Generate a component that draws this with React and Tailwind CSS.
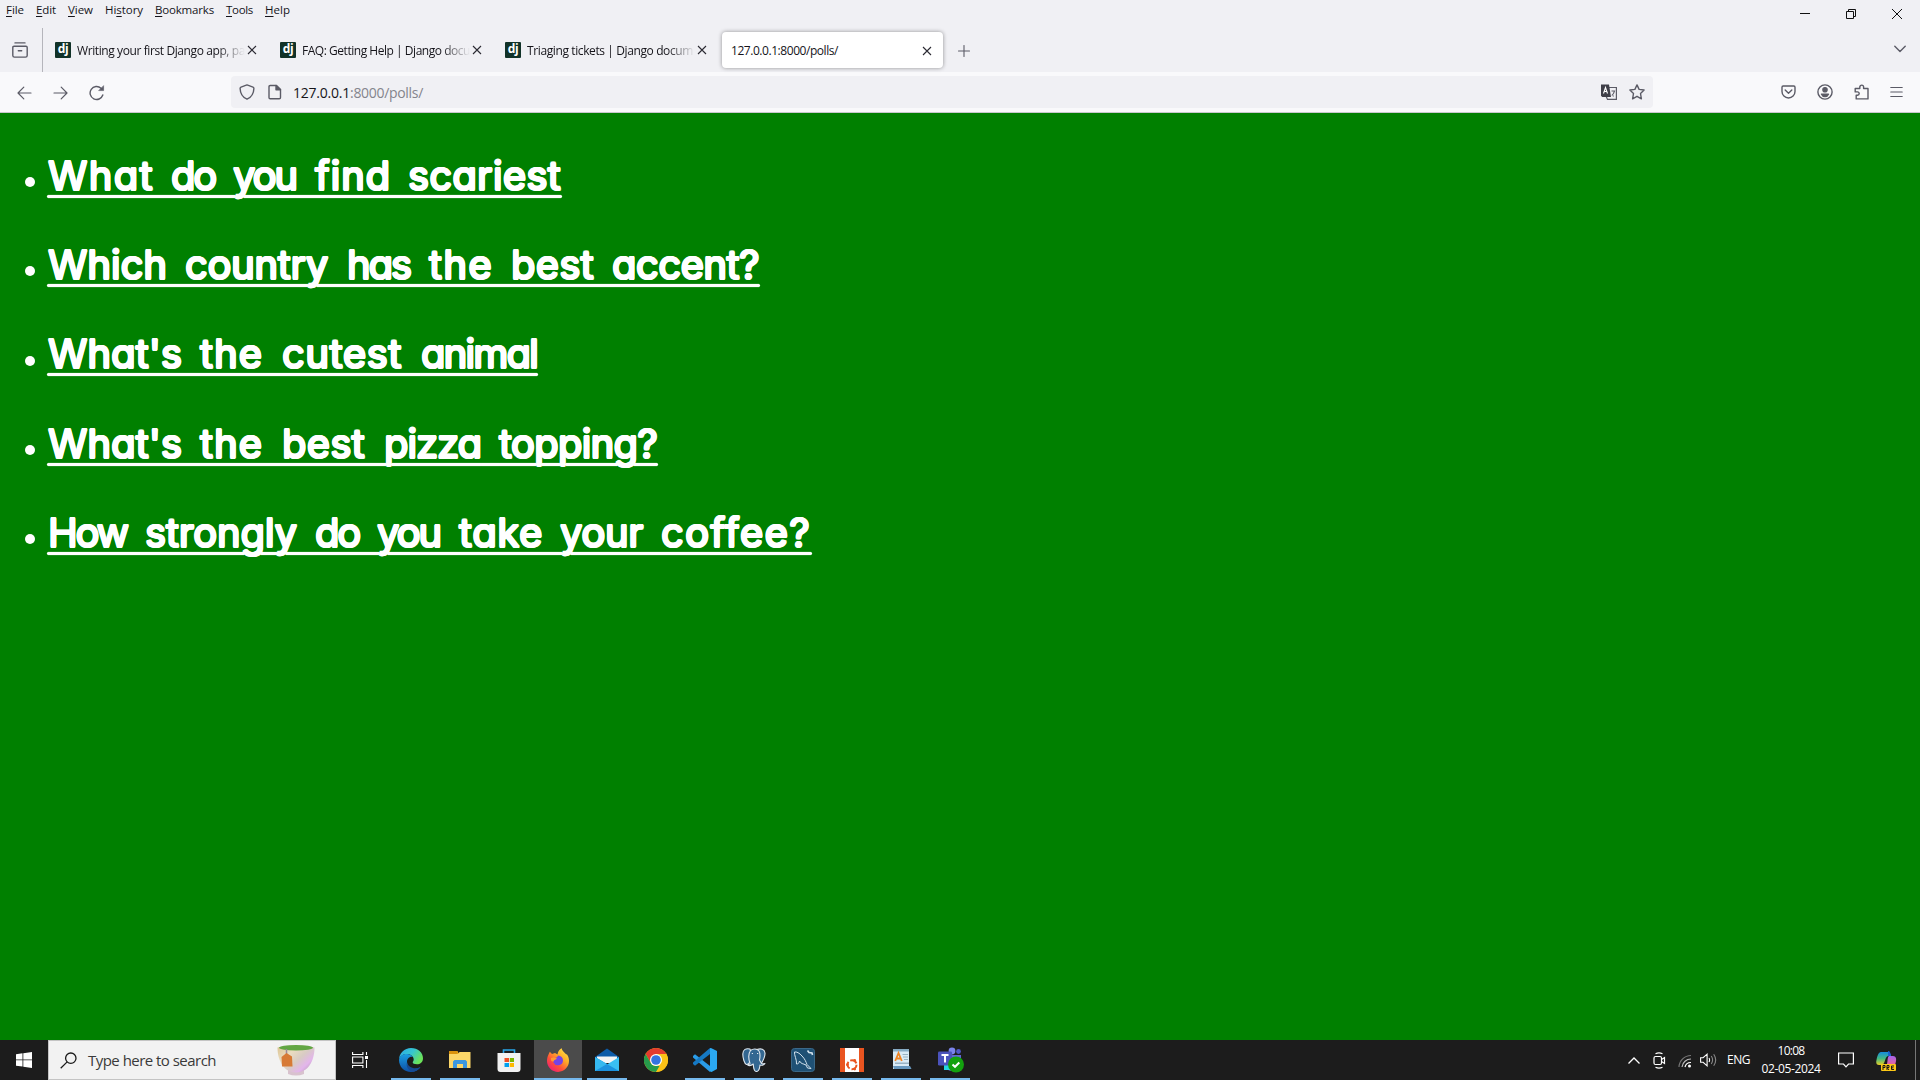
import React, { useLayoutEffect, useRef } from "react";

// Tracks a label so that it fills a given advance width.
function Fit({ w, children, className = "" }) {
  const ref = useRef(null);
  useLayoutEffect(() => {
    const el = ref.current;
    el.style.letterSpacing = "0px";
    const natural = el.getBoundingClientRect().width;
    el.style.letterSpacing = `${(w - natural) / el.textContent.length}px`;
  }, [w, children]);
  return (
    <span ref={ref} className={`whitespace-pre ${className}`}>
      {children}
    </span>
  );
}

const menus = [
  ["", "F", "ile", 18, "w-[30px]"],
  ["", "E", "dit", 20, "w-8"],
  ["", "V", "iew", 25, "w-[37px]"],
  ["Hi", "s", "tory", 38, "w-[50px]"],
  ["", "B", "ookmarks", 59, "w-[71px]"],
  ["", "T", "ools", 27, "w-[39px]"],
  ["", "H", "elp", 25, "w-[30px]"],
];

const questions = [
  [["What", 106], ["do", 44], ["you", 63], ["find", 76], ["scariest", 153]],
  [["Which", 119], ["country", 143], ["has", 63], ["the", 64], ["best", 83], ["accent?", 147]],
  [["What's", 134], ["the", 63], ["cutest", 120], ["animal", 116]],
  [["What's", 134], ["the", 63], ["best", 83], ["pizza", 97], ["topping?", 158]],
  [["How", 79], ["strongly", 152], ["do", 44], ["you", 63], ["take", 84], ["your", 83], ["coffee?", 150]],
];
const gaps = [
  [17, 18, 19, 17],
  [18, 19, 19, 18, 18],
  [18, 19, 19],
  [18, 19, 19, 18],
  [18, 18, 18, 19, 17, 18],
];

const Close = () => (
  <svg width="10" height="10" viewBox="0 0 10 10" className="shrink-0" stroke="#2b2a33" strokeWidth="1.1" fill="none">
    <path d="M1 1l8 8M9 1l-8 8" />
  </svg>
);

function Tab({ title, w }) {
  return (
    <div className="flex w-[225px] items-center pl-[11px]">
      <div className="flex h-4 w-4 shrink-0 items-center justify-center rounded-[1px] bg-[#113228] pb-[2px] font-['Open_Sans',sans-serif] text-[12px] leading-none font-bold tracking-[-0.5px] text-white">
        dj
      </div>
      <div className="mt-[2px] ml-[6px] w-[168px] [mask-image:linear-gradient(to_right,black_140px,transparent_168px)] text-[12px] leading-5 text-[#15141a]">
        <Fit w={w}>{title}</Fit>
      </div>
      <div className="ml-[2px] flex"><Close /></div>
    </div>
  );
}

const line = { fill: "none", stroke: "#5b5b66", strokeWidth: 1.4, strokeLinecap: "round", strokeLinejoin: "round" };

function Browser() {
  return (
    <header className="font-['Open_Sans',sans-serif]">
      <div className="flex h-7 justify-between bg-[#f0f0f4]">
        <div className="flex h-5 pl-[6px] text-[11.5px] leading-[19px] text-[#15141a]">
          {menus.map(([a, b, c, w, cell]) => (
            <div key={b + c} className={cell}>
              <Fit w={w}>
                {a}
                <u className="underline-offset-2">{b}</u>
                {c}
              </Fit>
            </div>
          ))}
        </div>
        <div className="flex pr-[17px] pt-2">
          <svg width="104" height="12" viewBox="0 0 104 12" fill="none" stroke="#111" strokeWidth="1">
            <path d="M1 5.5h10M47.500 3.500h7v7h-7zM49.500 3.500v-2h7v7h-2M93 1l10 10M103 1l-10 10" />
          </svg>
        </div>
      </div>
      <div className="flex h-11 bg-[#f0f0f4]">
        <div className="flex w-[43px] items-center border-r border-[#b5b5bb] pl-3">
          <svg width="16" height="16" viewBox="0 0 16 16" {...line}>
            <path d="M3 .9h10M2 4.200h12a1.200 1.200 0 0 1 1.200 1.200v8a1.700 1.700 0 0 1-1.700 1.700h-11a1.700 1.700 0 0 1-1.700-1.700v-8A1.200 1.200 0 0 1 2 4.200zM6.300 8.800h3.400" />
          </svg>
        </div>
        <div className="flex pl-[1px]">
          <Tab title="Writing your first Django app, pa" w={168} />
          <Tab title="FAQ: Getting Help | Django docu" w={168} />
          <Tab title="Triaging tickets | Django docum" w={166} />
        </div>
        <div className="mt-1 ml-[3px] flex h-9 w-[221px] items-center justify-between rounded-[4px] bg-white pt-[1px] pr-[11px] pl-[9px] text-[12px] text-[#15141a] shadow-[0_0_4px_rgba(0,0,0,0.4)]">
          <Fit w={107}>127.0.0.1:8000/polls/</Fit>
          <Close />
        </div>
        <div className="flex flex-1 items-center justify-between pt-[1px] pr-[14px] pl-[15px]">
          <svg width="12" height="12" viewBox="0 0 12 12" {...line} strokeWidth="1.1"><path d="M6 .5v11M.5 6h11" /></svg>
          <svg width="12" height="8" viewBox="0 0 12 8" {...line} className="mb-1"><path d="M.8 1.200L6 6.400l5.200-5.200" /></svg>
        </div>
      </div>
      <div className="flex h-[41px] items-center border-b border-[#c8c8cc] bg-[#f9f9fb]">
        <div className="flex w-[231px] items-center gap-[21px] pt-[2px] pl-[17px]">
          <svg width="15" height="14" viewBox="0 0 15 14" {...line} strokeWidth="1.2"><path d="M14 7H1M6.800 1.200L1 7l5.800 5.800" /></svg>
          <svg width="15" height="14" viewBox="0 0 15 14" {...line} strokeWidth="1.2"><path d="M1 7h13M8.200 1.200L14 7l-5.800 5.800" /></svg>
          <svg width="16" height="16" viewBox="0 0 16 16" {...line}>
            <path d="M13.800 10A6.500 6.500 0 1 1 12 3.200l1 1" />
            <path d="M14.600 1v4.600H10z" fill="#5b5b66" strokeWidth=".6" />
          </svg>
        </div>
        <div className="flex h-8 w-[1422px] items-center rounded-[4px] bg-[#f0f0f4] pl-2">
          <svg width="16" height="16" viewBox="0 0 16 16" {...line}><path d="M8 .9l6 2.200c.7.300.9.700.9 1.400C14.700 10 12 13.500 8 15.200 4 13.500 1.300 10 1.100 4.500c0-.7.200-1.100.9-1.400z" /></svg>
          <svg width="14" height="16" viewBox="0 0 14 16" className="ml-[13px]" {...line}>
            <path d="M2.200 1.500h6.300l4 4v8a1.300 1.300 0 0 1-1.300 1.300h-9A1.200 1.200 0 0 1 1 13.600V2.700a1.200 1.200 0 0 1 1.200-1.200z" />
            <path d="M8 1.500v4.300h4.500z" fill="#5b5b66" />
          </svg>
          <div className="ml-[11px] pt-[2px] text-[14px] leading-5 text-[#15141a]">
            <Fit w={57}>127.0.0.1</Fit>
            <Fit w={73} className="text-[#84848c]">:8000/polls/</Fit>
          </div>
          <div className="mr-2 ml-auto flex items-center gap-3">
            <svg width="16" height="16" viewBox="0 0 16 16" fill="none">
              <path d="M8 3.500h7.400v11.900H6.500L5 12" stroke="#5b5b66" strokeWidth="1.200" />
              <path d="M0 .5h8l2 12.500H1.200L0 11.800z" fill="#3f3f48" />
              <path d="M2.500 9.500l2-6 2 6M3.200 7.500h2.700" stroke="#fff" strokeWidth="1.100" />
              <path d="M10.500 7h3l-1 2.500-1.700 2M12.300 11.500v1" stroke="#5b5b66" strokeWidth="1.100" />
            </svg>
            <svg width="16" height="16" viewBox="0 0 16 16" {...line}><path d="M8 .9l2.100 4.500 5 .6-3.600 3.500.9 5.300L8 12.300l-4.400 2.500.9-5.300L.9 6l5-.6z" /></svg>
          </div>
        </div>
        <div className="flex flex-1 items-center justify-end gap-[21px] pr-[17px]">
          <svg width="15" height="14" viewBox="0 0 15 14" {...line}><path d="M2.200 1h10.600A1.300 1.300 0 0 1 14 2.300V6.500a6.500 6.500 0 0 1-13 0V2.300A1.300 1.300 0 0 1 2.200 1zM4.200 5l3.300 3.200L10.800 5" /></svg>
          <svg width="16" height="16" viewBox="0 0 16 16" {...line}>
            <circle cx="8" cy="8" r="7.100" /><circle cx="8" cy="5.700" r="2.100" fill="#5b5b66" /><path d="M4.500 10.200h7a3.800 3.800 0 0 1-7 0z" fill="#5b5b66" />
          </svg>
          <svg width="15" height="16" viewBox="0 0 15 16" {...line}><path d="M5.800 4.500V3a1.900 1.900 0 0 1 3.800 0v1.500H14v10.400H2.200v-3.600h1.300a1.700 1.700 0 0 0 0-3.400H1.200V4.500z" /></svg>
          <svg width="13" height="12" viewBox="0 0 13 12" {...line} strokeWidth="1.2"><path d="M.8 1.500h11.400M.8 6h11.400M.8 10.500h11.400" /></svg>
        </div>
      </div>
    </header>
  );
}

function Page() {
  return (
    <main className="flex-1 bg-[#008000] pt-[19px]">
      <ul className="font-['Comic_Sans_MS',Inter,sans-serif] text-[40px] font-normal text-white [font-feature-settings:'cv11','ss03','calt'_0]">
        {questions.map((words, i) => (
          <li key={i} className="flex h-[89.3px] items-center pl-[25px]">
            <span className="mt-[11px] mr-[13px] h-[10px] w-[10px] shrink-0 rounded-full bg-white" />
            <a className="mb-[2px] leading-[64px] whitespace-pre underline decoration-[1px] underline-offset-[6px] [text-shadow:1.1px_0_white,-1.1px_0_white,0_1.1px_white,0_-1.1px_white,0.8px_0.8px_white,-0.8px_0.8px_white,0.8px_-0.8px_white,-0.8px_-0.8px_white]">
              {words.map(([word, w], j) => (
                <React.Fragment key={j}>
                  <Fit w={w}>{word}</Fit>
                  {j < words.length - 1 && <Fit w={gaps[i][j]}> </Fit>}
                </React.Fragment>
              ))}
            </a>
          </li>
        ))}
      </ul>
    </main>
  );
}

const EdgeIcon = () => (
  <svg width="24" height="24" viewBox="0 0 24 24">
    <defs>
      <linearGradient id="eg" x1="0" y1="0" x2="1" y2=".5"><stop offset="0" stopColor="#2aa7e8" /><stop offset=".55" stopColor="#36c6d0" /><stop offset="1" stopColor="#6be35a" /></linearGradient>
      <linearGradient id="eb" x1="0" y1="0" x2="0" y2="1"><stop offset="0" stopColor="#1b9de2" /><stop offset="1" stopColor="#0d4fa5" /></linearGradient>
    </defs>
    <path d="M0 12C0 5 5.500 0 12 0c7 0 12 4.600 12 10.200 0 4.200-3 6-6 6-2.800 0-4.500-1-4.300-2 .1-.5 1-1 1-2.700C14.700 8.500 12 6 8 6 3.500 6 .2 9 0 12z" fill="url(#eg)" />
    <path d="M0 12c.3-4 4-6.200 8-6 2.500.100 4.800 1.400 6 3-3-1-6 1.300-6 5 0 4 4 7.500 9 6.800 2-.3 3.600-1.200 4.500-1.800C19.500 22 16 24 12 24 5 24 0 18.500 0 12z" fill="url(#eb)" />
    <path d="M8 14c-1.500 5 2 10 7 9.600 3-.8 5.200-2.400 6.500-4.600C16 22 8.500 19.500 8 14z" fill="#164a93" />
  </svg>
);
const ExplorerIcon = () => (
  <svg width="24" height="24" viewBox="0 0 24 24">
    <path d="M1 3h8.500l1 2H22v15H1z" fill="#e8a317" /><path d="M1 6h9l1.500-2H22.500v16H1z" fill="#fbd668" />
    <path d="M5 20v-6.500l1.500-1.500h11l1.500 1.500V20h-4v-4H9v4z" fill="#3b97de" /><path d="M1 3h8v3H1z" fill="#d9920d" />
  </svg>
);
const StoreIcon = () => (
  <svg width="24" height="24" viewBox="0 0 24 24">
    <path d="M6.500 6V2h11v4" fill="none" stroke="#27a5e8" strokeWidth="1.600" /><path d="M.5 5h23v16a3 3 0 0 1-3 3h-17a3 3 0 0 1-3-3z" fill="#f1f1f1" />
    <path d="M7.500 10H12v4H7.500z" fill="#f04e25" /><path d="M12.800 10H17v4h-4.200z" fill="#7db700" /><path d="M7.500 15H12v4H7.500z" fill="#009fee" /><path d="M12.800 15H17v4h-4.200z" fill="#fdb900" />
  </svg>
);
const FirefoxIcon = () => (
  <svg width="24" height="24" viewBox="0 0 24 24">
    <defs><linearGradient id="ff" x1="1" y1="0" x2=".2" y2="1"><stop offset="0" stopColor="#fff04d" /><stop offset=".4" stopColor="#ffac28" /><stop offset=".7" stopColor="#ff5038" /><stop offset="1" stopColor="#ed1b78" /></linearGradient></defs>
    <path d="M2.500 6.500L3.800 3.800 6 6l3-1 2.500 1.500C12 3 14 1 15.800.3c0 2.500 1.800 3.300 3.700 5.500l1.700 1c1.300 2.200 1.800 4 1.800 6A11 11 0 0 1 1 13c0-2.500.5-4.500 1.500-6.500z" fill="url(#ff)" />
    <path d="M8.500 10c2-.2 3-1 3.500-2.500 3 .2 5 2.300 5 5a5 5 0 0 1-9.500 2c-.8-1.800-.3-3.500 1-4.500z" fill="#7543e5" />
    <path d="M5 10c2-1 4.500-.5 6 .6-1 1.600-3 1-3.200 2.600-2 1-3.500-1-2.800-3.200z" fill="#ff9933" />
  </svg>
);
const MailIcon = () => (
  <svg width="24" height="24" viewBox="0 0 24 24"><path d="M0 9L12 .5 24 9v4H0z" fill="#0d5ca9" /><path d="M2 8.500h20V15H2z" fill="#f4f4f4" /><path d="M0 9l12 7.500L24 9v14H0z" fill="#3abff3" /><path d="M0 9l24 14H0z" fill="#1c92df" /><path d="M0 9l12 7L0 23z" fill="#35b8ef" /></svg>
);
const ChromeIcon = () => (
  <svg width="24" height="24" viewBox="0 0 24 24"><circle cx="12" cy="12" r="12" fill="#fbc116" /><path d="M12 0a12 12 0 0 1 10.400 6H12L6.800 15 1.600 6A12 12 0 0 1 12 0z" fill="#e33b2e" /><path d="M1.600 6l5.200 9A6 6 0 0 0 12 18h5.200L12 24A12 12 0 0 1 1.600 6z" fill="#269b4b" /><path d="M17.200 15L12 24a12 12 0 0 0 10.400-18H12z" fill="#fbc116" /><circle cx="12" cy="12" r="6" fill="#fff" /><circle cx="12" cy="12" r="4.800" fill="#3474e0" /></svg>
);
const CodeIcon = () => (
  <svg width="24" height="24" viewBox="0 0 24 24"><path d="M0 8l2-1.800L17 18v6L0 9.500z" fill="#2a9ce8" /><path d="M0 16l2 1.800L17 6V0L0 14.500z" fill="#1679c4" /><path d="M17 0l1.500.2L24 3v18l-5.500 3L17 23.500z" fill="#2ba9f2" /></svg>
);
const PostgresIcon = () => (
  <svg width="24" height="24" viewBox="0 0 24 24" fill="#336791" stroke="#dfe7ed" strokeWidth="1.100" strokeLinejoin="round">
    <path d="M8 1C4 .3 1 1 .8 6c0 4 1.600 9.800 3.700 10.500 1 .2 2-.8 3-2l3-4z" /><path d="M15 1.500C19 .2 22.500 1 23 5c.3 3-2 8-3.500 10l-3 .5-3-6z" />
    <path d="M8.500 2.500C11 .5 15 .5 17 3c1.500 2.500 1.200 5.500.5 9l2 3.500c1.500.5 2.500.2 3.500 0-1 1.500-3 2-5 1.500-.5 3-.5 6.500-3.500 6.500s-3-4-3.200-7.500C9.500 17.500 7 18 5.500 16.800c1-.4 2.500-.5 2.500-1.300C6.500 11 6 6 8.500 2.500z" /><path d="M9.800 5.500h1.200M15 5.500h1.200" />
  </svg>
);
const MysqlIcon = () => (
  <svg width="24" height="24" viewBox="0 0 24 24" fill="none" stroke="#d5e4ef"><rect x=".5" y=".5" width="23" height="23" rx="3" fill="#1f5175" stroke="#3b6888" /><path d="M5.500 16C6 12 3 7 3.500 4c2-.5 5 1 7.500 4 3 3 4 6 5 8.500l4 4-3.500-.5-1.500-3c-3-1.500-5-1-6.500-4-.5 2-1 3-3 3z" strokeWidth="1" /><path d="M16.500 2.500l1.500 2 3 .5.500 2" strokeWidth="1.600" /></svg>
);
const UbuntuIcon = () => (
  <svg width="24" height="24" viewBox="0 0 24 24"><path d="M0 0h24v24H0z" fill="#e95420" /><path d="M5 0h14v24H5z" fill="#fff" /><circle cx="12" cy="16.700" r="4.500" fill="none" stroke="#e95420" strokeWidth="2" strokeDasharray="7.400 2" /><circle cx="7.400" cy="16.700" r="1.400" fill="#e95420" /><circle cx="14.700" cy="12.500" r="1.400" fill="#e95420" /><circle cx="14.700" cy="21" r="1.400" fill="#e95420" /></svg>
);
const WordpadIcon = () => (
  <svg width="24" height="24" viewBox="0 0 24 24"><path d="M4 1h16v17l2 3H4z" fill="#d9eaf5" /><path d="M4 1h16v2.500H4z" fill="#86abc4" /><path d="M6 16h14v-1.500H6zM13.500 7H19V6h-5.500zM14 9.500h5v-1h-5zM15 12h4v-1h-4z" fill="#98b2c3" /><path d="M4 18h17l1.500 3H5z" fill="#6797bd" /><path d="M6.200 13l3.300-8 3.300 8M7.300 10.500h4.400" fill="none" stroke="#ee8423" strokeWidth="1.800" /></svg>
);
const TeamsIcon = () => (
  <svg width="28" height="26" viewBox="0 0 28 26" className="ml-[2px]"><circle cx="15" cy="4" r="3.400" fill="#7b83eb" /><circle cx="21.500" cy="4.500" r="2.400" fill="#5059c9" /><path d="M9 8h15v8q-2 8-9 8t-6-8z" fill="#6068d2" /><path d="M7 16h8v7H7z" fill="#24d6e0" /><rect x="1" y="4.500" width="14" height="14" rx="1.300" fill="#4b53bc" /><path d="M4.500 8h7M8 8v7.500" stroke="#fff" strokeWidth="2" /><circle cx="19" cy="17.500" r="8" fill="#13a10e" /><path d="M15.500 17.500l2.500 2.300 4.300-4.300" fill="none" stroke="#fff" strokeWidth="2" /></svg>
);

const apps = [
  [EdgeIcon, 1], [ExplorerIcon, 1], [StoreIcon, 0], [FirefoxIcon, 2], [MailIcon, 1], [ChromeIcon, 0],
  [CodeIcon, 1], [PostgresIcon, 1], [MysqlIcon, 1], [UbuntuIcon, 1], [WordpadIcon, 1], [TeamsIcon, 1],
];
const underline = ["w-0", "w-10", "w-12"];

function Taskbar() {
  return (
    <footer className="flex h-10 bg-[#1c1c1c] font-['Open_Sans',sans-serif] text-white">
      <div className="flex w-12 items-center justify-center">
        <svg width="16" height="16" viewBox="0 0 16 16" fill="#fff"><path d="M0 2.200L6.500 1.300v6.200H0zM7.300 1.200L16 0v7.500H7.300zM0 8.300h6.500v6.300L0 13.700zM7.300 8.300H16V16l-8.700-1.200z" /></svg>
      </div>
      <div className="flex w-72 items-center border border-[#c4c4c4] bg-[#f2f2f2] pl-[11px]">
        <svg width="17" height="17" viewBox="0 0 17 17" fill="none" stroke="#1a1a1a" strokeWidth="1.300"><circle cx="10.800" cy="6.200" r="5.200" /><path d="M7.200 9.900L.7 16.300" /></svg>
        <div className="ml-[11px] text-[15px] leading-5 text-[#3a3a3a]"><Fit w={128}>Type here to search</Fit></div>
        <svg width="38" height="32" viewBox="0 0 38 32" className="ml-[61px]">
          <defs><linearGradient id="cup" x1="0" y1="0" x2="1" y2=".8"><stop offset="0" stopColor="#dcc391" /><stop offset=".35" stopColor="#eadcc0" /><stop offset=".6" stopColor="#d8cbc4" /><stop offset=".82" stopColor="#e3b5ec" /><stop offset="1" stopColor="#b9a0b5" /></linearGradient></defs>
          <path d="M11 26h16v4q-8 3-16 0z" fill="#d8c2ce" /><path d="M.5 3.500Q19-1 37.500 3.500C37.500 17 31 28.500 19 28.500S.5 17 .5 3.500z" fill="url(#cup)" />
          <ellipse cx="19" cy="3.700" rx="17" ry="2.800" fill="#62a644" /><path d="M9.500 5v6" stroke="#9a8a9a" strokeWidth="1.500" /><path d="M4.500 13l5-4 5.500 3.500.5 10H5z" fill="#d77a35" />
        </svg>
      </div>
      <div className="flex w-[51px] items-center pl-4">
        <svg width="17" height="16" viewBox="0 0 17 16" fill="none" stroke="#fff" strokeWidth="1.100"><path d="M.6 0v2.500h10.300V0M.6 5h10.300v6H.6zM.6 16v-2.500h10.300V16M14.500 0v3M14.500 8v8" /><path d="M13 4h3v3h-3z" fill="#fff" stroke="none" /></svg>
      </div>
      <div className="flex gap-[1px]">
        {apps.map(([Icon, state], i) => (
          <div key={i} className={`flex w-12 flex-col items-center ${state === 2 ? "bg-[#4b4b4b]" : ""}`}>
            <div className="flex h-[38px] items-center pt-[2px]"><Icon /></div>
            <div className={`h-[2px] bg-[#76b9ed] ${underline[state]}`} />
          </div>
        ))}
      </div>
      <div className="ml-auto flex items-center">
        <svg width="12" height="7" viewBox="0 0 12 7" fill="none" stroke="#fff" strokeWidth="1.300"><path d="M.5 6.500L6 1l5.500 5.500" /></svg>
        <svg width="13" height="17" viewBox="0 0 13 17" className="ml-[13px]" fill="none" stroke="#fff" strokeWidth="1.200"><rect x="1" y="4.500" width="7.500" height="8" rx="1.500" /><path d="M8.500 7.500l3-2v6l-3-2M2.500 1.800Q6 0 9.500 1.800M2.500 15.200Q6 17 9.500 15.200" /></svg>
        <svg width="14" height="14" viewBox="0 0 14 14" className="mt-[2px] ml-3" fill="none" strokeWidth="1.200"><path d="M1 13A12 12 0 0 1 13 1.500" stroke="#777" /><path d="M4 13a9 9 0 0 1 9-8" stroke="#bbb" /><path d="M7 13a6 6 0 0 1 6-4.500" stroke="#fff" /><circle cx="11.500" cy="12" r="1.500" fill="#fff" /></svg>
        <svg width="17" height="14" viewBox="0 0 17 14" className="ml-2" fill="none" stroke="#fff" strokeWidth="1.100"><path d="M.6 4.700h2.500l4-3.500v11.600l-4-3.500H.6zM9 5q1.200 2 0 4" /><path d="M11.300 3q2.600 4 0 8M13.700 1.200q4 5.800 0 11.600" stroke="#888" /></svg>
        <div className="ml-[10px] w-[35px] text-[12px] leading-5"><Fit w={23}>ENG</Fit></div>
        <div className="mb-[1px] flex w-[58px] flex-col items-center text-[12px] leading-[18px]"><Fit w={27}>10:08</Fit><Fit w={59}>02-05-2024</Fit></div>
        <svg width="16" height="16" viewBox="0 0 16 16" className="ml-[18px]" fill="none" stroke="#fff" strokeWidth="1.200"><path d="M.6 1h14.800v11H10.500L8 14.800 5.500 12H.6z" /></svg>
        <svg width="21" height="20" viewBox="0 0 21 20" className="mt-[1px] ml-[22px]">
          <defs><linearGradient id="co" x1="0" y1="0" x2="0" y2="1"><stop offset="0" stopColor="#168cdd" /><stop offset=".5" stopColor="#42b883" /><stop offset="1" stopColor="#e8ce24" /></linearGradient><linearGradient id="cp" x1="0" y1="0" x2="0" y2="1"><stop offset="0" stopColor="#a463ed" /><stop offset="1" stopColor="#f2658e" /></linearGradient></defs>
          <path d="M5 1h7c2 0 2.500 2 3 4h-3c-3 0-3 9-6 9H3c-3 0-3-3-2.500-5 .8-4 2-8 4.500-8z" fill="url(#co)" /><path d="M12 0c2 0 2.500 2 3 5H12z" fill="#1960ce" /><path d="M13 5h4c3 0 3.500 3 3 5-.5 3-1 5-3 5h-7c2-1 1-10 3-10z" fill="url(#cp)" />
          <rect x="5" y="13" width="15" height="7" rx="1" fill="#fdc816" /><path d="M7 19v-4.500h2v2H7M11 19v-4.500h2v2h-2l2 2.500M18 15h-2.500v3.500H18M15.500 16.800h2" fill="none" stroke="#171717" />
        </svg>
        <div className="ml-[18px] h-10 w-[5px] border-l border-[#777]" />
      </div>
    </footer>
  );
}

export default function App() {
  return (
    <div className="flex h-[1080px] w-[1920px] flex-col overflow-hidden">
      <Browser />
      <Page />
      <Taskbar />
    </div>
  );
}
